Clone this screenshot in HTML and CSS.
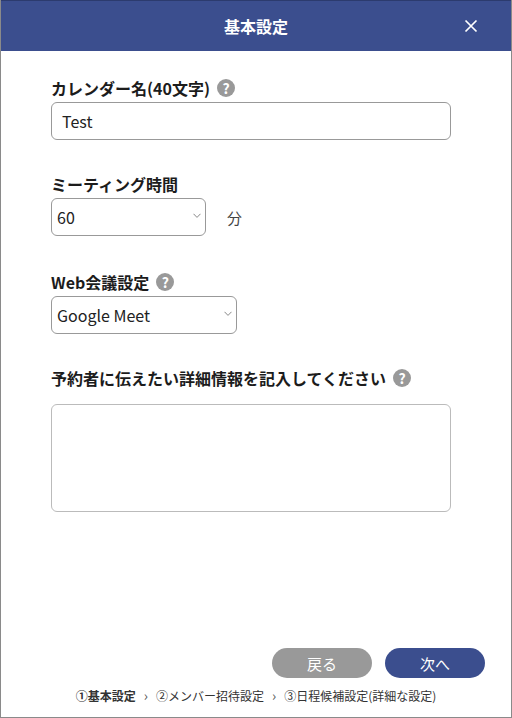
FILE: index.html
```html
<!DOCTYPE html>
<html lang="ja">
<head>
    <meta charset="UTF-8">
    <meta name="viewport" content="width=device-width, initial-scale=1.0">
    <title>基本設定</title>
    <link rel="stylesheet" href="styles.css">
</head>
<body>
    <div class="modal">
        <div class="modal-header">
            <span class="modal-title">基本設定</span>
            <svg class="close-icon" width="14" height="14" viewBox="0 0 14 14">
                <path d="M1.5 1.5L12.5 12.5M12.5 1.5L1.5 12.5" stroke="#fff" stroke-width="1.7" fill="none"/>
            </svg>
        </div>

        <div class="modal-body">
            <div class="field field-name">
                <div class="label">カレンダー名(40文字) <span class="help">?</span></div>
                <div class="input">Test</div>
            </div>

            <div class="field field-time">
                <div class="label">ミーティング時間</div>
                <div class="select-row">
                    <div class="select select-time">
                        <span>60</span>
                        <svg class="chevron" width="8" height="6" viewBox="0 0 8 6"><path d="M0.5 0.8L4 4.4L7.5 0.8" stroke="#888" stroke-width="1" fill="none"/></svg>
                    </div>
                    <span class="unit">分</span>
                </div>
            </div>

            <div class="field field-web">
                <div class="label">Web会議設定 <span class="help">?</span></div>
                <div class="select select-web">
                    <span>Google Meet</span>
                    <svg class="chevron" width="8" height="6" viewBox="0 0 8 6"><path d="M0.5 0.8L4 4.4L7.5 0.8" stroke="#888" stroke-width="1" fill="none"/></svg>
                </div>
            </div>

            <div class="field field-detail">
                <div class="label label-detail">予約者に伝えたい詳細情報を記入してください <span class="help">?</span></div>
                <div class="textarea"></div>
            </div>
        </div>

        <div class="modal-footer">
            <div class="buttons">
                <button class="btn btn-back">戻る</button>
                <button class="btn btn-next">次へ</button>
            </div>
            <div class="steps">
                <span><b>①基本設定</b></span>
                <span class="arrow">›</span>
                <span>②メンバー招待設定</span>
                <span class="arrow">›</span>
                <span>③日程候補設定(詳細な設定)</span>
            </div>
        </div>
    </div>
</body>
</html>
```

FILE: styles.css
```css
* {
    box-sizing: border-box;
}
html, body {
    margin: 0;
    padding: 0;
    height: 718px;
    overflow: hidden;
}
body {
    font-family: "Noto Sans CJK JP", "Noto Sans", sans-serif;
    background-color: #fff;
    color: #222;
}
.modal {
    height: 718px;
    display: flex;
    flex-direction: column;
    border: 1px solid #8a8a8a;
    border-top: 0;
    background: white;
}
.modal-header {
    height: 51px;
    flex-shrink: 0;
    background-color: #3b4e8e;
    border-top: 1px solid #2c3b6e;
    display: flex;
    align-items: center;
    justify-content: center;
    position: relative;
}
.modal-title {
    color: white;
    font-size: 16px;
    font-weight: 700;
    line-height: 20px;
}
.close-icon {
    position: absolute;
    top: 18px;
    right: 33px;
}
.modal-body {
    flex: 1;
    padding: 0 60px 0 50px;
}
.field-name {
    margin-top: 24px;
}
.field-time {
    margin-top: 31px;
}
.field-web {
    margin-top: 33px;
}
.field-detail {
    margin-top: 31px;
}
.label {
    display: flex;
    align-items: center;
    gap: 7px;
    height: 27px;
    padding-bottom: 2px;
    font-size: 16px;
    font-weight: 700;
    color: #1c1c1c;
    white-space: nowrap;
}
.help {
    display: inline-block;
    width: 18px;
    height: 18px;
    border-radius: 50%;
    background-color: #999;
    color: white;
    font-size: 14px;
    font-weight: 700;
    line-height: 18px;
    text-align: center;
}
.input {
    height: 38px;
    border: 1px solid #999;
    border-radius: 6px;
    padding: 0 10px;
    font-size: 16px;
    line-height: 37px;
    color: #222;
}
.select-row {
    display: flex;
    align-items: center;
}
.select {
    height: 38px;
    border: 1px solid #999;
    border-radius: 6px;
    padding: 0 4px 0 5px;
    font-size: 16px;
    display: flex;
    align-items: center;
    justify-content: space-between;
    color: #222;
}
.select-time {
    width: 155px;
}
.select-web {
    width: 186px;
}
.chevron {
    margin-bottom: 3px;
}
.unit {
    margin-left: 21px;
    font-size: 15px;
    color: #444;
}
.label-detail {
    margin-bottom: 12px;
}
.textarea {
    height: 108px;
    border: 1px solid #bbb;
    border-radius: 6px;
}
.modal-footer {
    flex-shrink: 0;
    height: 69px;
}
.buttons {
    display: flex;
    justify-content: flex-end;
    gap: 13px;
    padding-right: 26px;
}
.btn {
    width: 100px;
    height: 30px;
    border: 0;
    border-radius: 15px;
    color: white;
    font-family: inherit;
    font-size: 15px;
    padding: 0;
}
.btn-back {
    background-color: #999;
}
.btn-next {
    background-color: #3b4e8e;
}
.steps {
    display: flex;
    justify-content: center;
    gap: 8px;
    margin-top: 9px;
    font-size: 12px;
    line-height: 18px;
    color: #333;
    white-space: nowrap;
}
.steps b {
    font-weight: 700;
}
.arrow {
    font-size: 14px;
    line-height: 16px;
    color: #555;
}
```
